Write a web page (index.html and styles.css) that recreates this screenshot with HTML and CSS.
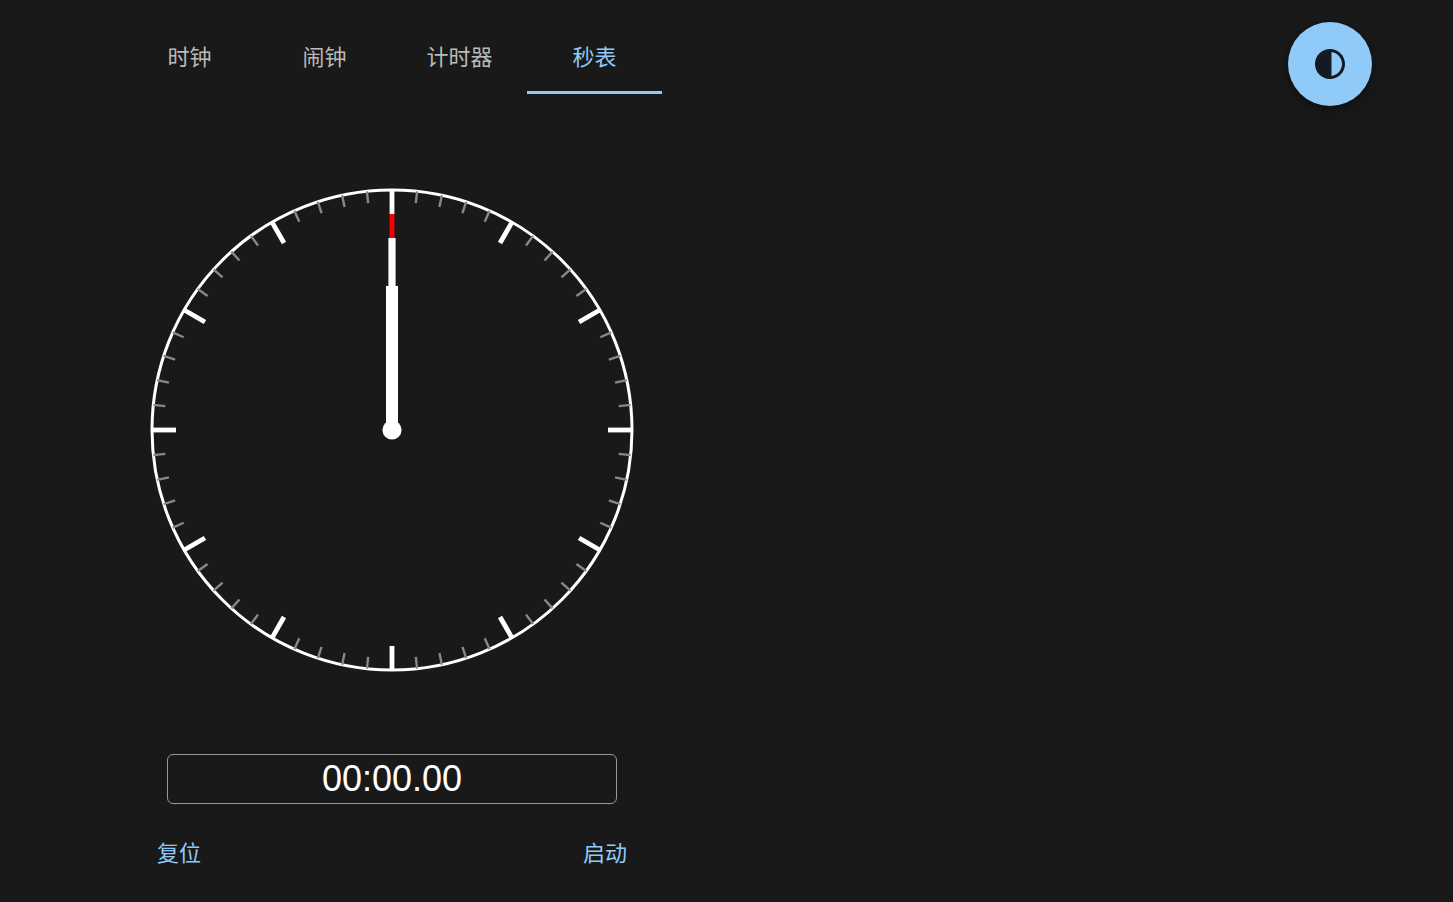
FILE: index.html
```html
<!DOCTYPE html>
<html lang="zh-CN">
<head>
<meta charset="utf-8">
<meta name="viewport" content="width=device-width, initial-scale=1">
<title>秒表</title>
<link rel="stylesheet" href="styles.css">
</head>
<body>
<div class="app">
  <header class="topbar">
    <nav class="tabs" role="tablist">
      <button class="tab" type="button" role="tab" aria-selected="false">时钟</button>
      <button class="tab" type="button" role="tab" aria-selected="false">闹钟</button>
      <button class="tab" type="button" role="tab" aria-selected="false">计时器</button>
      <button class="tab tab-active" type="button" role="tab" aria-selected="true">秒表</button>
    </nav>
    <button class="fab" type="button" aria-label="切换主题">
      <svg class="fab-icon" viewBox="0 0 24 24" aria-hidden="true"><path d="M12 22c5.52 0 10-4.48 10-10S17.52 2 12 2 2 6.48 2 12s4.480 10 10 10zm1-17.930c3.940.490 7 3.850 7 7.930s-3.050 7.440-7 7.930V4.070z"/></svg>
    </button>
  </header>
  <main class="stopwatch">
    <svg class="dial" viewBox="-242 -242 484 484" aria-hidden="true">
      <defs>
        <g id="hour">
          <path class="tick-major" d="M0-240V-216"/>
          <g class="tick-minor">
            <path d="M0-240V-228" transform="rotate(6)"/>
            <path d="M0-240V-228" transform="rotate(12)"/>
            <path d="M0-240V-228" transform="rotate(18)"/>
            <path d="M0-240V-228" transform="rotate(24)"/>
          </g>
        </g>
      </defs>
      <circle class="ring" r="240"/>
      <use href="#hour"/>
      <use href="#hour" transform="rotate(30)"/>
      <use href="#hour" transform="rotate(60)"/>
      <use href="#hour" transform="rotate(90)"/>
      <use href="#hour" transform="rotate(120)"/>
      <use href="#hour" transform="rotate(150)"/>
      <use href="#hour" transform="rotate(180)"/>
      <use href="#hour" transform="rotate(210)"/>
      <use href="#hour" transform="rotate(240)"/>
      <use href="#hour" transform="rotate(270)"/>
      <use href="#hour" transform="rotate(300)"/>
      <use href="#hour" transform="rotate(330)"/>
      <path class="hand-second" d="M0 0V-216"/>
      <path class="hand-minute" d="M0 0V-192"/>
      <path class="hand-hour" d="M0 0V-144"/>
      <circle class="hub" r="9.6"/>
    </svg>
    <input class="readout" type="text" value="00:00.00" aria-label="计时" readonly>
    <div class="actions">
      <button class="action" type="button">复位</button>
      <button class="action" type="button">启动</button>
    </div>
  </main>
</div>
</body>
</html>
```
FILE: styles.css
```css
* {
  box-sizing: border-box;
}

body {
  margin: 0;
  background: #191919;
  color: #fff;
  font-family: "Liberation Sans", "Noto Sans CJK SC", sans-serif;
}

button {
  border: 0;
  background: none;
  font-family: inherit;
  font-size: 22px;
  line-height: 32px;
  cursor: pointer;
}

.app {
  padding: 22px 81px 20px 122px;
}

.topbar {
  display: flex;
  align-items: flex-start;
  justify-content: space-between;
}

.tabs {
  display: grid;
  grid-template-columns: repeat(4, 1fr);
  width: 100%;
  max-width: 540px;
}

.tab {
  height: 72px;
  padding: 3px 0 0;
  border-bottom: 3px solid transparent;
  color: #bababa;
}

.tab-active {
  border-bottom-color: #90caf9;
  color: #90caf9;
}

.fab {
  display: flex;
  flex: none;
  align-items: center;
  justify-content: center;
  width: 84px;
  height: 84px;
  padding: 0;
  border-radius: 50%;
  background: #90caf9;
  color: rgba(0, 0, 0, 0.87);
  box-shadow: 0 3px 5px -1px rgba(0, 0, 0, 0.2), 0 6px 10px rgba(0, 0, 0, 0.14), 0 1px 18px rgba(0, 0, 0, 0.12);
}

.fab-icon {
  width: 36px;
  height: 36px;
  fill: currentColor;
}

.stopwatch {
  display: flex;
  flex-direction: column;
  align-items: center;
  max-width: 540px;
  padding-top: 82px;
}

.dial {
  width: 100%;
  max-width: 484px;
}

.ring {
  fill: none;
  stroke: #fff;
  stroke-width: 3;
}

.tick-major {
  stroke: #fff;
  stroke-width: 4.8;
}

.tick-minor {
  stroke: #888;
  stroke-width: 2.4;
}

.hand-second {
  stroke: #f00;
  stroke-width: 4.8;
}

.hand-minute {
  stroke: #fff;
  stroke-width: 7.2;
}

.hand-hour {
  stroke: #fff;
  stroke-width: 12;
}

.hub {
  fill: #fff;
}

.readout {
  width: 100%;
  max-width: 450px;
  height: 50px;
  margin-top: 82px;
  padding: 0;
  border: 1px solid #999;
  border-radius: 6px;
  outline: 0;
  background: transparent;
  color: #fff;
  font-family: inherit;
  font-size: 36px;
  text-align: center;
}

.actions {
  display: flex;
  justify-content: space-between;
  width: 100%;
  margin-top: 24px;
  padding: 0 9px;
}

.action {
  width: 96px;
  padding: 10px 0;
  color: #90caf9;
}
```
